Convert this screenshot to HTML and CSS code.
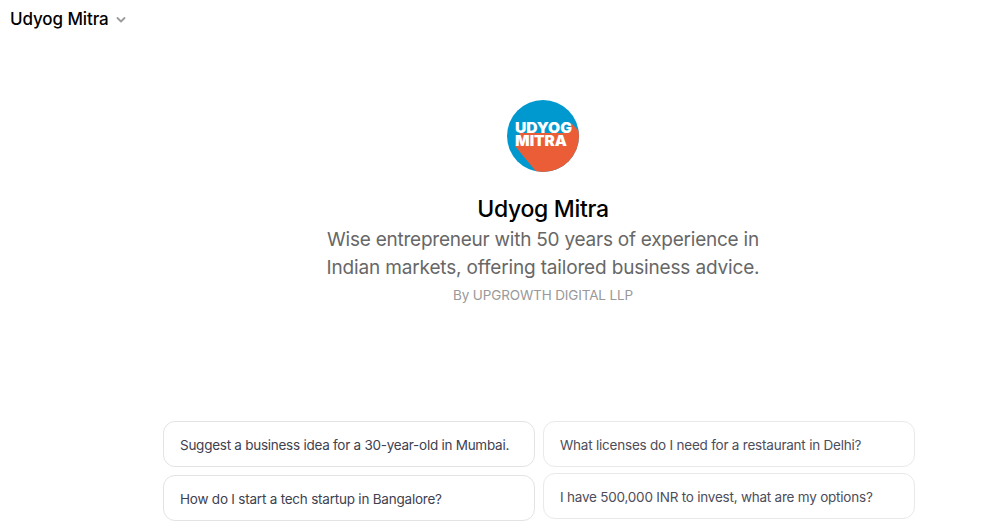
FILE: index.html
```
<!DOCTYPE html>
<html lang="en">
<head>
    <meta charset="UTF-8">
    <meta name="viewport" content="width=device-width, initial-scale=1.0">
    <title>Udyog Mitra</title>
    <link rel="stylesheet" href="styles.css">
</head>
<body>
    <!-- Header -->
    <header class="header">
        <span class="header-name">Udyog Mitra</span>
        <svg class="chevron" width="10" height="6" viewBox="0 0 10 6" fill="none">
            <path d="M1.5 1L5 4.5L8.500 1" stroke="#9b9b9b" stroke-width="1.8" stroke-linecap="round" stroke-linejoin="round"/>
        </svg>
    </header>

    <main class="container">
        <!-- Profile -->
        <section class="profile">
            <svg class="logo" width="72" height="72" viewBox="0 0 72 72">
                <defs>
                    <clipPath id="circle"><circle cx="36" cy="36" r="36"/></clipPath>
                </defs>
                <g clip-path="url(#circle)">
                    <rect width="72" height="72" fill="#0099cf"/>
                    <path d="M64 23L80 39V80H36L8 46L15 38L12 33H62Z" fill="#eb5d37"/>
                </g>
                <text class="logo-text" x="8" y="33" textLength="57" lengthAdjust="spacingAndGlyphs">UDYOG</text>
                <text class="logo-text" x="8" y="46" textLength="52" lengthAdjust="spacingAndGlyphs">MITRA</text>
            </svg>
            <h1 class="title">Udyog Mitra</h1>
            <p class="description"><span class="line-one">Wise entrepreneur with 50 years of experience in</span><br><span class="line-two">Indian markets, offering tailored business advice.</span></p>
            <p class="author">By UPGROWTH DIGITAL LLP</p>
        </section>

        <!-- Suggestions -->
        <section class="suggestions">
            <div class="column">
                <button class="btn btn-first">Suggest a business idea for a 30-year-old in Mumbai.</button>
                <button class="btn">How do I start a tech startup in Bangalore?</button>
            </div>
            <div class="column column-right">
                <button class="btn">What licenses do I need for a restaurant in Delhi?</button>
                <button class="btn">I have 500,000 INR to invest, what are my options?</button>
            </div>
        </section>
    </main>
</body>
</html>
```
FILE: styles.css
```
body {
    margin: 0;
    background-color: #fff;
    font-family: Inter, "Liberation Sans", sans-serif;
    height: 528px;
    overflow: hidden;
}
.header {
    display: flex;
    align-items: center;
    gap: 7px;
    height: 38px;
    padding-left: 10px;
}
.header-name {
    font-size: 17px;
    font-weight: 500;
    letter-spacing: -0.1px;
    color: #000;
}
.chevron {
    margin-top: 1px;
}
.container {
    width: 752px;
    margin-left: 163px;
    padding-top: 62px;
}
.profile {
    display: flex;
    flex-direction: column;
    align-items: center;
    height: 321px;
    padding-left: 8px;
    text-align: center;
}
.logo-text {
    font-family: Inter, sans-serif;
    font-size: 14px;
    font-weight: 900;
    fill: #fff;
}
.title {
    margin: 21px 0 0;
    font-size: 23px;
    line-height: 32px;
    font-weight: 500;
    letter-spacing: -0.3px;
    color: #000;
}
.description {
    margin: 1px 0 0;
    font-size: 19px;
    line-height: 28px;
    color: #676767;
    white-space: nowrap;
}
.line-one {
    letter-spacing: -0.24px;
}
.line-two {
    letter-spacing: -0.16px;
}
.author {
    margin: 3px 0 0;
    font-size: 13.5px;
    line-height: 20px;
    letter-spacing: -0.14px;
    color: #999;
}
.suggestions {
    display: flex;
    gap: 8px;
}
.column {
    display: flex;
    flex: 1;
    min-width: 0;
    flex-direction: column;
    gap: 8px;
}
.column-right {
    gap: 6px;
}
.btn {
    height: 46px;
    padding: 2px 16px 0;
    border: 1px solid #e3e3e3;
    border-radius: 12px;
    background-color: #fff;
    color: #40414f;
    font-family: inherit;
    font-size: 13.5px;
    line-height: 20px;
    letter-spacing: -0.22px;
    text-align: left;
    white-space: nowrap;
}
.btn-first {
    letter-spacing: -0.26px;
}
.column-right .btn {
    border-color: #e9e9e9;
    color: #4d4d5a;
}
```
